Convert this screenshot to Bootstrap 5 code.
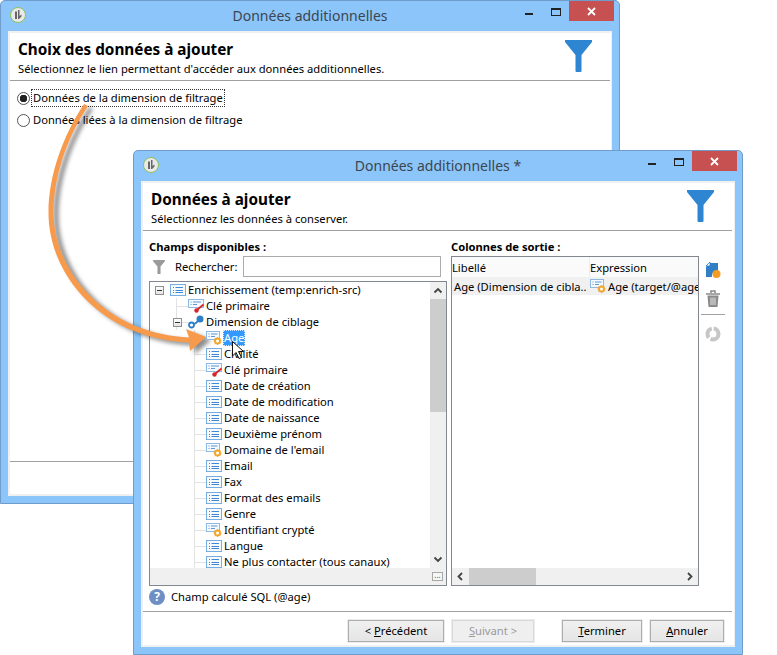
<!DOCTYPE html>
<html lang="fr">
<head>
    <meta charset="UTF-8">
    <title>Données additionnelles</title>
    <link href="https://cdn.jsdelivr.net/npm/bootstrap@5.3.0/dist/css/bootstrap.min.css" rel="stylesheet">
    <style>
        body {
            margin: 0;
            background: #fff;
            width: 777px;
            height: 655px;
            overflow: hidden;
            position: relative;
            font-family: "Noto Sans", "Liberation Sans", sans-serif;
            font-size: 11.200px;
            line-height: 16px;
            color: #000;
        }

        /* windows */
        .dlg {
            position: absolute;
            background: #8bc5f9;
            border: 1px solid #6f9ccb;
            border-radius: 5px 5px 0 0;
        }
        .dlg-back { left: 0; top: 0; width: 620px; height: 504px; }
        .dlg-front { left: 133px; top: 150px; width: 610px; height: 505px; }

        .titlebar {
            position: relative;
            height: 30px;
            line-height: 30px;
            text-align: center;
            font-size: 14px;
            color: #3c4650;
            flex: none;
        }
        .title-icon { position: absolute; left: 9px; top: 6px; }
        .win-min { position: absolute; right: 86px; top: 12px; width: 8px; height: 2px; background: #222; }
        .win-max { position: absolute; right: 58px; top: 7px; width: 10px; height: 8px; border: 1px solid #222; border-top-width: 2px; }
        .win-close {
            position: absolute;
            right: 5px;
            top: 0;
            width: 45px;
            height: 20px;
            background: #c75050;
            color: #fff;
            display: flex;
            align-items: center;
            justify-content: center;
        }
        .client {
            margin: 0 7px 7px;
            height: calc(100% - 37px);
            background: #fff;
            border: 2px solid #f0f0f0;
            border-right-width: 1px;
        }

        /* wizard header and footer */
        .wiz-head {
            height: 48px;
            flex: none;
            margin: 0 1px 0 0;
            padding: 7px 18px 0 8px;
            border-bottom: 1px solid #a0a0a0;
        }
        .dlg-front .wiz-head { margin-right: 2px; }
        .wiz-title { font-size: 15.300px; line-height: 18px; font-weight: 700; margin: 0; }
        .wiz-sub { line-height: 16px; margin: 3px 0 0; }
        .wiz-foot { height: 33px; flex: none; margin-right: 1px; border-top: 1px solid #a0a0a0; }
        .wiz-foot-btns { height: 34px; margin-right: 2px; padding: 8px 8px 0 0; }

        /* radios */
        .radios { padding: 6px 0 0 7px; }
        .radio-line { height: 22px; margin: 0; padding: 0; min-height: 0; }
        .radio-line .form-check-input {
            float: none;
            width: 13px;
            height: 13px;
            margin: 0;
            border: 1px solid #555;
            background-image: none;
        }
        .radio-line .form-check-input:checked {
            background: radial-gradient(circle, #222 0 3.500px, #fff 4px);
            border-color: #555;
        }
        .radio-line .form-check-label { padding: 0 1px; margin-left: 1px; border: 1px dotted transparent; }
        .radio-line .has-focus { border-color: #333; }

        /* wizard buttons */
        .wbtn {
            width: 96px;
            height: 22px;
            padding: 0;
            font-size: 11.200px;
            line-height: 18px;
            color: #000;
            border: 1px solid #adadad;
            border-radius: 0;
            background: linear-gradient(#f0f0f0, #e5e5e5);
            outline: 1px solid #ececec;
            outline-offset: 0;
        }
        .wbtn:disabled { color: #9a9a9a; background: #efefef; border-color: #d9d9d9; opacity: 1; }
        .wbtn-next { width: 82px; margin-left: 8px; }
        .wbtn-end { width: 80px; margin-left: 28px; }
        .wbtn-cancel { width: 74px; margin-left: 8px; }

        /* body of the front window */
        .panes { height: 380px; flex: none; padding-left: 6px; }
        .pane-left { width: 298px; flex: none; }
        .pane-right { width: 248px; flex: none; margin-left: 4px; }
        .pane-label { height: 25px; padding-top: 8px; font-weight: 700; line-height: 16px; }
        .search-row { height: 21px; margin-bottom: 4px; }
        .search-label { margin-left: 10px; width: 68px; }
        .search-input {
            width: 198px;
            height: 21px;
            padding: 0 2px;
            border: 1px solid #ababab;
            border-radius: 0;
            font-size: 11.200px;
            min-height: 0;
        }
        .help-row { height: 25px; padding-top: 3px; }
        .help-icon {
            width: 16px;
            height: 16px;
            border-radius: 50%;
            background: #6d8fc4;
            color: #fff;
            font-weight: 700;
            font-size: 12px;
            line-height: 16px;
            text-align: center;
            margin-right: 6px;
        }

        /* tree */
        .tree-box { height: 305px; border: 1px solid #828790; }
        .tree-main { height: 286px; }
        .tree-rows { width: 280px; flex: none; overflow: hidden; }
        .tree-row {
            position: relative;
            height: 16px;
            white-space: nowrap;
            display: flex;
            align-items: center;
        }
        .lvl-0 { padding-left: 20px; }
        .lvl-1 { padding-left: 38px; }
        .lvl-2 { padding-left: 56px; }
        .lvl-1::before, .lvl-2::before {
            content: "";
            position: absolute;
            top: 8px;
            width: 12px;
            height: 1px;
            background: #e2e2e2;
        }
        .lvl-1::after, .lvl-2::after {
            content: "";
            position: absolute;
            top: 0;
            width: 1px;
            height: 16px;
            background: #e2e2e2;
        }
        .lvl-1::before, .lvl-1::after { left: 26px; }
        .lvl-2::before, .lvl-2::after { left: 44px; }
        .tree-icon { flex: none; margin-right: 2px; position: relative; z-index: 1; }
        .expander {
            position: absolute;
            z-index: 1;
            top: 4px;
            width: 9px;
            height: 9px;
            background: linear-gradient(#fff, #e4e4e4);
            border: 1px solid #8e8f8f;
        }
        .expander::after {
            content: "";
            position: absolute;
            left: 1px;
            top: 3px;
            width: 5px;
            height: 1px;
            background: #333;
        }
        .lvl-0 .expander { left: 5px; }
        .lvl-1 .expander { left: 23px; }
        .tree-sel {
            background: #3399ff;
            color: #fff;
            outline: 1px dotted #cfe6ff;
            outline-offset: -1px;
            padding: 0 1px;
            margin-left: -1px;
        }
        .vscroll { width: 16px; flex: none; background: #f0f0f0; }
        .vthumb { height: 113px; background: #cdcdcd; }
        .sbtn { height: 17px; flex: none; }
        .tree-foot { height: 17px; background: #f0f0f0; padding-right: 3px; }
        .more-btn {
            width: 11px;
            height: 9px;
            border: 1px solid #a8a8a8;
            background: #f6f6f6;
            font-size: 8px;
            line-height: 4px;
            text-align: center;
            color: #555;
        }

        /* output grid */
        .grid-box { height: 330px; border: 1px solid #828790; }
        .grid-area { height: 311px; overflow: hidden; }
        .grid-head { height: 20px; background: #fafafa; line-height: 21px; }
        .grid-row { height: 18px; background: #f0f0f0; line-height: 19px; white-space: nowrap; overflow: hidden; }
        .cell-a { width: 138px; flex: none; border-right: 1px solid #e8eef5; }
        .grid-row .cell-a { padding-left: 2px; border-right: 0; }
        .cell-b { padding-left: 0; overflow: hidden; }
        .hscroll { height: 17px; background: #f0f0f0; }
        .hthumb { width: 67px; background: #cdcdcd; }
        .hbtn { width: 17px; flex: none; }

        .tools { width: 33px; flex: none; padding: 31px 0 0 2px; }
        .tool-trash { margin-top: 11px; }
        .tool-sep { width: 24px; height: 1px; background: #a0a0a0; margin: 6px 0 11px; }

        .arrow-layer {
            position: absolute;
            left: 0;
            top: 0;
            pointer-events: none;
        }
        .arrow-shape { filter: drop-shadow(5px 3px 2px rgba(0, 0, 0, .45)); }
    </style>
</head>
<body>
    <!-- shared icons -->
    <svg width="0" height="0" class="position-absolute">
        <defs>
            <symbol id="funnel" viewBox="0 0 27 32">
                <path d="M0 0H27V2L16.500 15V31Q16.500 32 15.500 32H11.500Q10.500 32 10.500 31V15L0 2Z" fill="#2e86d3"/>
            </symbol>
            <symbol id="field" viewBox="0 0 16 14">
                <rect x=".5" y="1.500" width="15" height="11" fill="#f6fafe" stroke="#74aee3"/>
                <path d="M3 4.500H4M3 7.500H4M3 9.500H4M5.500 4.500H13M5.500 7.500H13M5.500 9.500H13" stroke="#3f8bd3"/>
            </symbol>
            <symbol id="calc" viewBox="0 0 16 14">
                <rect x=".5" y=".5" width="13" height="8" fill="#f6fafe" stroke="#8db9e4"/>
                <path d="M2.500 3H3.500M2.500 5.500H3.500M5 3H11.500M5 5.500H9" stroke="#5b9ad6"/>
                <circle cx="11.500" cy="10" r="2.500" fill="#fff" stroke="#f4a62a" stroke-width="2"/>
                <path d="M11.500 6V7M11.500 13V14M7.500 10H8.500M14.500 10H15.500M8.800 7.300L9.500 8M13.500 12L14.200 12.700M8.800 12.700L9.500 12M13.500 8L14.200 7.300" stroke="#f4a62a"/>
            </symbol>
            <symbol id="keyed" viewBox="0 0 16 14">
                <rect x=".5" y=".5" width="15" height="8" fill="#f6fafe" stroke="#8db9e4"/>
                <path d="M2.500 3H3.500M2.500 5.500H3.500M5 3H13M5 5.500H9" stroke="#5b9ad6"/>
                <path d="M15.500 5.500L9.500 10.500" stroke="#d8232a" stroke-width="1.800"/>
                <circle cx="8.500" cy="11.500" r="2.200" fill="#d8232a"/>
            </symbol>
            <symbol id="link" viewBox="0 0 16 14">
                <circle cx="3.500" cy="10" r="2.500" fill="#fff" stroke="#2f7fc8" stroke-width="1.800"/>
                <path d="M6 9C8 8.500 9 7 10.500 5.500" stroke="#2f7fc8" stroke-width="1.800" fill="none"/>
                <circle cx="12" cy="4" r="3.500" fill="#2f7fc8"/>
            </symbol>
            <symbol id="title-logo" viewBox="0 0 16 16">
                <circle cx="8" cy="8" r="7.500" fill="#e9e9e9" stroke="#8fbe5c"/>
                <path d="M5 4.500H7V12H5ZM8 3H9.500V9L11.500 7.500V9.500L9 12H8Z" fill="#666"/>
            </symbol>
            <symbol id="chev-up" viewBox="0 0 16 17"><path d="M4.500 10.500L8 7L11.500 10.500" fill="none" stroke="#444" stroke-width="1.800"/></symbol>
            <symbol id="chev-down" viewBox="0 0 16 17"><path d="M4.500 6.500L8 10L11.500 6.500" fill="none" stroke="#444" stroke-width="1.800"/></symbol>
            <symbol id="chev-left" viewBox="0 0 17 17"><path d="M10 5L6.500 8.500L10 12" fill="none" stroke="#444" stroke-width="1.800"/></symbol>
            <symbol id="chev-right" viewBox="0 0 17 17"><path d="M7 5L10.500 8.500L7 12" fill="none" stroke="#444" stroke-width="1.800"/></symbol>
        </defs>
    </svg>

    <!-- back window -->
    <div class="dlg dlg-back">
        <div class="titlebar">
            <svg class="title-icon" width="16" height="16"><use href="#title-logo"/></svg>
            Données additionnelles
            <span class="win-min"></span><span class="win-max"></span>
            <span class="win-close"><svg width="9" height="9"><path d="M1 1L8 8M8 1L1 8" stroke="#fff" stroke-width="1.800"/></svg></span>
        </div>
        <div class="client d-flex flex-column">
            <div class="wiz-head d-flex justify-content-between">
                <div>
                    <h1 class="wiz-title">Choix des données à ajouter</h1>
                    <p class="wiz-sub">Sélectionnez le lien permettant d'accéder aux données additionnelles.</p>
                </div>
                <svg width="27" height="32"><use href="#funnel"/></svg>
            </div>
            <div class="radios flex-fill">
                <div class="form-check radio-line d-flex align-items-center">
                    <input class="form-check-input" type="radio" name="dim" id="dim1" checked>
                    <label class="form-check-label has-focus" for="dim1">Données de la dimension de filtrage</label>
                </div>
                <div class="form-check radio-line d-flex align-items-center">
                    <input class="form-check-input" type="radio" name="dim" id="dim2">
                    <label class="form-check-label" for="dim2">Données liées à la dimension de filtrage</label>
                </div>
            </div>
            <div class="wiz-foot"></div>
        </div>
    </div>

    <!-- front window -->
    <div class="dlg dlg-front">
        <div class="titlebar">
            <svg class="title-icon" width="16" height="16"><use href="#title-logo"/></svg>
            Données additionnelles *
            <span class="win-min"></span><span class="win-max"></span>
            <span class="win-close"><svg width="9" height="9"><path d="M1 1L8 8M8 1L1 8" stroke="#fff" stroke-width="1.800"/></svg></span>
        </div>
        <div class="client d-flex flex-column">
            <div class="wiz-head d-flex justify-content-between">
                <div>
                    <h1 class="wiz-title">Données à ajouter</h1>
                    <p class="wiz-sub">Sélectionnez les données à conserver.</p>
                </div>
                <svg width="27" height="32"><use href="#funnel"/></svg>
            </div>
            <div class="panes d-flex">
                <div class="pane-left">
                    <div class="pane-label">Champs disponibles :</div>
                    <div class="search-row d-flex align-items-center">
                        <svg class="ms-1" width="12" height="14" viewBox="0 0 27 32"><path d="M0 0H27V3L17 15V32H10V15L0 3Z" fill="#9a9a9a"/></svg>
                        <span class="search-label">Rechercher:</span>
                        <input class="form-control search-input" type="text" aria-label="Rechercher">
                    </div>
                    <div class="tree-box">
                        <div class="tree-main d-flex justify-content-between">
                            <div class="tree-rows" id="tree"></div>
                            <div class="vscroll d-flex flex-column">
                                <svg class="sbtn" width="16" height="17"><use href="#chev-up"/></svg>
                                <div class="vthumb"></div>
                                <div class="flex-fill"></div>
                                <svg class="sbtn" width="16" height="17"><use href="#chev-down"/></svg>
                            </div>
                        </div>
                        <div class="tree-foot d-flex justify-content-end align-items-center">
                            <div class="more-btn">...</div>
                        </div>
                    </div>
                    <div class="help-row d-flex align-items-start">
                        <span class="help-icon">?</span>
                        <span>Champ calculé SQL (@age)</span>
                    </div>
                </div>
                <div class="pane-right">
                    <div class="pane-label">Colonnes de sortie :</div>
                    <div class="grid-box">
                        <div class="grid-area">
                            <div class="grid-head d-flex">
                                <div class="cell-a">Libellé</div>
                                <div class="cell-b">Expression</div>
                            </div>
                            <div class="grid-row d-flex">
                                <div class="cell-a">Age (Dimension de cibla..</div>
                                <div class="cell-b d-flex align-items-center">
                                    <svg class="tree-icon" width="16" height="14"><use href="#calc"/></svg>
                                    <span>Age (target/@age)</span>
                                </div>
                            </div>
                        </div>
                        <div class="hscroll d-flex justify-content-between">
                            <div class="d-flex">
                                <svg class="hbtn" width="17" height="17"><use href="#chev-left"/></svg>
                                <div class="hthumb"></div>
                            </div>
                            <svg class="hbtn" width="17" height="17"><use href="#chev-right"/></svg>
                        </div>
                    </div>
                </div>
                <div class="tools d-flex flex-column align-items-start">
                    <svg class="ms-1" width="16" height="17" viewBox="0 0 16 17">
                        <path d="M5 1H13V9A5 5 0 0 0 7 15H1V5Z" fill="#2e7fc6"/>
                        <path d="M1 4L5 0V4Z" fill="#fff" stroke="#2e7fc6" stroke-width=".8"/>
                        <circle cx="11.500" cy="12" r="4" fill="#f59a23"/>
                    </svg>
                    <svg class="ms-1 tool-trash" width="16" height="18" viewBox="0 0 16 18">
                        <path d="M1 4H15M6 3V1H10V3" stroke="#8a8a8a" stroke-width="1.500" fill="none"/>
                        <path d="M2.500 5.500H13.500L12.500 17H3.500Z" fill="#8a8a8a"/>
                        <path d="M6 7.500V15M8 7.500V15M10 7.500V15" stroke="#e8e8e8"/>
                    </svg>
                    <div class="tool-sep"></div>
                    <svg class="ms-1" width="16" height="16" viewBox="0 0 16 16">
                        <circle cx="8" cy="8" r="5.500" fill="none" stroke="#c6c6c6" stroke-width="4" stroke-dasharray="11 2"/>
                    </svg>
                </div>
            </div>
            <div class="wiz-foot wiz-foot-btns d-flex justify-content-end">
                <button class="btn wbtn" type="button">&lt; <u>P</u>récédent</button>
                <button class="btn wbtn wbtn-next" type="button" disabled><u>S</u>uivant &gt;</button>
                <button class="btn wbtn wbtn-end" type="button"><u>T</u>erminer</button>
                <button class="btn wbtn wbtn-cancel" type="button"><u>A</u>nnuler</button>
            </div>
        </div>
    </div>

    <!-- annotation arrow and mouse cursor -->
    <svg class="arrow-layer" width="777" height="655" viewBox="0 0 777 655">
        <path class="arrow-shape" d="M88 106C68 136 53.500 175 53.500 213C53.500 268 102 333 189 337.500L186 329L206 337L190 351L189 342.500C98 338 48.500 272 48.500 213C48.500 174 64 134 84 104Z" fill="#f89a4b"/>
        <path d="M232.500 341.500V356L236 352.500L239 358.500L241.500 357.500L238.500 351.500H243.500Z" fill="#fff" stroke="#111" stroke-width="1"/>
    </svg>

    <script>
        // Tree content: [level, icon, label, expander?, selected?]
        const treeRows = [
            [0, 'field', 'Enrichissement (temp:enrich-src)', true],
            [1, 'keyed', 'Clé primaire'],
            [1, 'link', 'Dimension de ciblage', true],
            [2, 'calc', 'Age', false, true],
            [2, 'field', 'Civilité'],
            [2, 'keyed', 'Clé primaire'],
            [2, 'field', 'Date de création'],
            [2, 'field', 'Date de modification'],
            [2, 'field', 'Date de naissance'],
            [2, 'field', 'Deuxième prénom'],
            [2, 'calc', "Domaine de l'email"],
            [2, 'field', 'Email'],
            [2, 'field', 'Fax'],
            [2, 'field', 'Format des emails'],
            [2, 'field', 'Genre'],
            [2, 'calc', 'Identifiant crypté'],
            [2, 'field', 'Langue'],
            [2, 'field', 'Ne plus contacter (tous canaux)']
        ];
        const tree = document.getElementById('tree');
        treeRows.forEach(([level, icon, label, expander, selected]) => {
            const row = document.createElement('div');
            row.className = `tree-row lvl-${level}`;
            row.innerHTML = `
                ${expander ? '<span class="expander"></span>' : ''}
                <svg class="tree-icon" width="16" height="14"><use href="#${icon}"/></svg>
                <span class="${selected ? 'tree-sel' : ''}">${label}</span>`;
            tree.appendChild(row);
        });
    </script>
    <script src="https://cdn.jsdelivr.net/npm/bootstrap@5.3.0/dist/js/bootstrap.bundle.min.js"></script>
</body>
</html>
